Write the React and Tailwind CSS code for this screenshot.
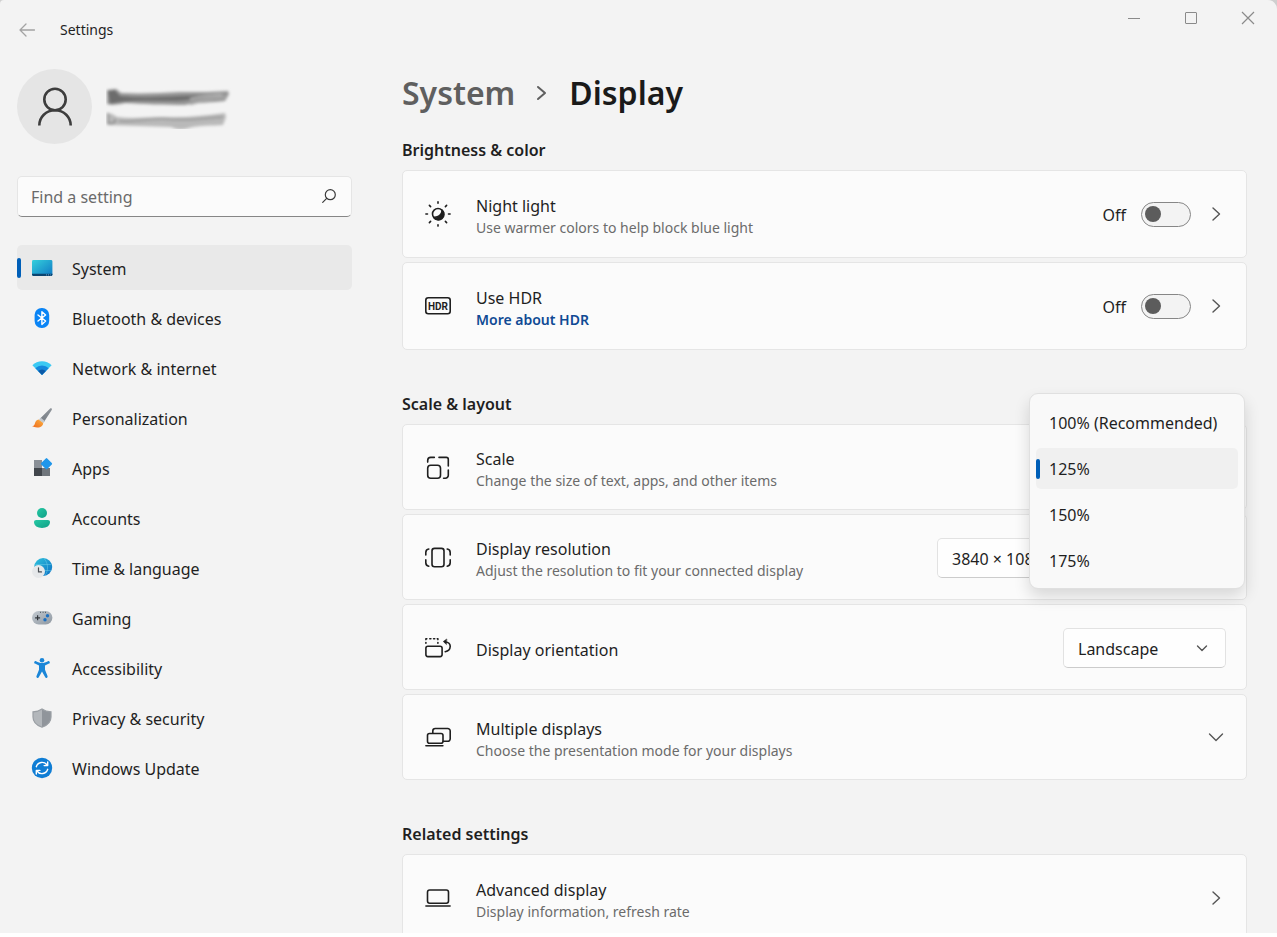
import { useState } from "react";

const navItems = [
  { label: "System", icon: SystemIcon },
  { label: "Bluetooth & devices", icon: BluetoothIcon },
  { label: "Network & internet", icon: NetworkIcon },
  { label: "Personalization", icon: BrushIcon },
  { label: "Apps", icon: AppsIcon },
  { label: "Accounts", icon: AccountsIcon },
  { label: "Time & language", icon: TimeIcon },
  { label: "Gaming", icon: GamingIcon },
  { label: "Accessibility", icon: AccessibilityIcon },
  { label: "Privacy & security", icon: ShieldIcon },
  { label: "Windows Update", icon: UpdateIcon },
];

const scaleOptions = ["100% (Recommended)", "125%", "150%", "175%"];

/* ---------- sidebar icons ---------- */

function NavSvg({ children }) {
  return (
    <svg className="h-5 w-5 shrink-0 overflow-visible" viewBox="0 0 20 20" fill="none" aria-hidden="true">
      {children}
    </svg>
  );
}

function SystemIcon() {
  return (
    <NavSvg>
      <defs>
        <linearGradient id="sys" x1="0" y1="0" x2="1" y2="1">
          <stop offset="0" stopColor="#35d0dc" />
          <stop offset="1" stopColor="#0f78c4" />
        </linearGradient>
      </defs>
      <rect x="0" y="2" width="20.4" height="16" rx="1.4" fill="url(#sys)" />
      <path d="M0 15.8h20.4v.8a1.4 1.4 0 0 1-1.4 1.4H1.4A1.4 1.4 0 0 1 0 16.6z" fill="#0b4470" />
      <path d="M14 16.9h1M16 16.9h1M18 16.9h.8" stroke="#7fb6dc" strokeWidth=".8" />
    </NavSvg>
  );
}

function BluetoothIcon() {
  return (
    <NavSvg>
      <rect x="2.6" y="0" width="14.6" height="20" rx="7" fill="#0a84f5" />
      <path
        d="M6 7l7.600 6-3.700 3.400V3.700l3.700 3.300-7.600 6"
        stroke="#fff"
        strokeWidth="1.4"
        strokeLinejoin="round"
        strokeLinecap="round"
      />
    </NavSvg>
  );
}

function NetworkIcon() {
  return (
    <NavSvg>
      <path d="M.4 7.200a13.500 13.500 0 0 1 19.200 0L10 17z" fill="#3bc9f3" />
      <path d="M3.300 10.200a9.400 9.400 0 0 1 13.400 0L10 17z" fill="#1487dc" />
      <path d="M6.200 13.100a5.400 5.400 0 0 1 7.600 0L10 17z" fill="#0b5aa8" />
    </NavSvg>
  );
}

function BrushIcon() {
  return (
    <NavSvg>
      <defs>
        <linearGradient id="handle" x1="1" y1="0" x2="0" y2="1">
          <stop offset="0" stopColor="#8f959b" />
          <stop offset="1" stopColor="#767c83" />
        </linearGradient>
        <linearGradient id="bristle" x1="1" y1="0" x2="0" y2="1">
          <stop offset="0" stopColor="#fbb040" />
          <stop offset="1" stopColor="#ee6a1c" />
        </linearGradient>
      </defs>
      <path d="M19.600.5c.5.400.4 1 .1 1.500l-7.900 12.300-4.100-3.300L17.900.700c.5-.5 1.200-.6 1.700-.2z" fill="url(#handle)" />
      <path d="M8.800 9.800l4 3.200-1.600 2.200-4.300-3.500z" fill="#c4c9ce" />
      <path d="M6.600 11.500l4.500 3.600c.3 2.800-2.600 4.700-6 4.500-1.900-.1-3.900-.6-5.100-1.500 2-.2 2.500-1.300 2.900-2.700.5-1.900 1.700-3.600 3.700-3.900z" fill="url(#bristle)" />
    </NavSvg>
  );
}

function AppsIcon() {
  return (
    <NavSvg>
      <rect x="2" y="2" width="8" height="8" fill="#8a9097" />
      <rect x="2" y="10" width="8" height="8" fill="#41464c" />
      <rect x="10" y="10" width="8" height="8" fill="#70767c" />
      <path d="M13.800.4a1 1 0 0 1 1.400 0l4.600 4.700a1 1 0 0 1 0 1.400l-4.600 4.600a1 1 0 0 1-1.400 0L9.200 6.500a1 1 0 0 1 0-1.400z" fill="#1f96ea" />
    </NavSvg>
  );
}

function AccountsIcon() {
  return (
    <NavSvg>
      <defs>
        <linearGradient id="acc" x1="0" y1="0" x2="1" y2="1">
          <stop offset="0" stopColor="#26c9a4" />
          <stop offset="1" stopColor="#0f9f86" />
        </linearGradient>
      </defs>
      <circle cx="10" cy="5" r="5" fill="url(#acc)" />
      <path d="M4.200 12h11.600c1.300 0 2.200.9 2.200 2.100 0 3.800-3.500 5.900-8 5.900s-8-2.100-8-5.900C2 12.900 2.900 12 4.200 12z" fill="url(#acc)" />
    </NavSvg>
  );
}

function TimeIcon() {
  return (
    <NavSvg>
      <defs>
        <linearGradient id="globe" x1="0" y1="0" x2="1" y2="1">
          <stop offset="0" stopColor="#2fc3dc" />
          <stop offset="1" stopColor="#0c6fc4" />
        </linearGradient>
      </defs>
      <circle cx="11.200" cy="9" r="9" fill="url(#globe)" />
      <path d="M3.500 6.500h16M9 12.500h10.500M12 .5c4.500 4.500 4.500 12.500 1 17" stroke="#7fdcf0" strokeWidth=".8" opacity=".5" />
      <circle cx="6.500" cy="13.500" r="6.500" fill="#e6e8ea" />
      <path d="M6.500 9.800v4.100h3" stroke="#4a4f55" strokeWidth="1.200" strokeLinecap="round" />
    </NavSvg>
  );
}

function GamingIcon() {
  return (
    <NavSvg>
      <defs>
        <linearGradient id="pad" x1="0" y1="0" x2="1" y2="1">
          <stop offset="0" stopColor="#c3cad1" />
          <stop offset="1" stopColor="#8f98a1" />
        </linearGradient>
      </defs>
      <rect x="0" y="3" width="20.400" height="13.400" rx="6.700" fill="url(#pad)" />
      <path d="M8 4.300h1M10.600 4.300h1M13 4.300h1" stroke="#4a5158" strokeWidth="1" />
      <path d="M5.600 7.300v5M3.100 9.800h5" stroke="#32373c" strokeWidth="1.200" />
      <circle cx="15.500" cy="7.700" r="1.700" fill="#1d6fc0" />
      <circle cx="13" cy="11.800" r="1.700" fill="#1d6fc0" />
    </NavSvg>
  );
}

function AccessibilityIcon() {
  return (
    <NavSvg>
      <circle cx="10" cy="2.300" r="2.300" fill="#1a86d8" />
      <path
        d="M2.300 3.900c.3-.8 1.100-1 1.800-.7C6 4.100 8 5 10 5s4-.9 5.900-1.800c.7-.3 1.500-.1 1.800.7.300.7 0 1.400-.7 1.700l-4 1.800v4.400l2.500 6.300c.3.800 0 1.500-.7 1.800-.7.200-1.400 0-1.700-.8L10 13.600l-3.100 5.500c-.3.800-1 1-1.700.8-.7-.3-1-1-.7-1.800L7 11.800V7.400L3 5.600c-.7-.3-1-1-.7-1.700z"
        fill="#1a86d8"
      />
    </NavSvg>
  );
}

function ShieldIcon() {
  return (
    <NavSvg>
      <path d="M10 1c2.600 1.900 5.500 2.700 9 2.800V9c0 5-3.500 8.300-9 10.200z" fill="#90959b" />
      <path d="M10 1C7.400 2.900 4.500 3.700 1 3.800V9c0 5 3.500 8.300 9 10.200z" fill="#b3b7bb" />
      <path d="M10 1c2.600 1.900 5.500 2.700 9 2.800V9c0 5-3.500 8.300-9 10.200C4.500 17.300 1 14 1 9V3.800C4.500 3.700 7.400 2.900 10 1z" stroke="#9a9fa4" strokeWidth="1.200" />
    </NavSvg>
  );
}

function UpdateIcon() {
  return (
    <NavSvg>
      <circle cx="10" cy="10" r="10.200" fill="#0f7dd4" />
      <path
        d="M4.300 8.700A6 6 0 0 1 15 7M15.700 4v3.600h-3.600M15.700 11.300A6 6 0 0 1 5 13M4.300 16v-3.600h3.600"
        stroke="#fff"
        strokeWidth="1.400"
        strokeLinecap="round"
        strokeLinejoin="round"
      />
    </NavSvg>
  );
}

/* ---------- card icons ---------- */

function CardSvg({ children }) {
  return (
    <svg
      className="shrink-0 text-[#1f1f1f]"
      width="26"
      height="26"
      viewBox="0 0 26 26"
      fill="none"
      stroke="currentColor"
      strokeWidth="1.600"
      strokeLinecap="round"
      strokeLinejoin="round"
      aria-hidden="true"
    >
      {children}
    </svg>
  );
}

function NightLightIcon() {
  return (
    <CardSvg>
      <circle cx="13" cy="13" r="5.500" />
      <path d="M17.200 9.400A5.500 5.500 0 1 1 8.700 16.200c4.500.5 8.200-2.200 8.500-6.800z" fill="currentColor" />
      <path d="M13 .9v1.300M13 23.800v1.300M.9 13h1.600M23.500 13h1.600M4.400 4.400l1.200 1.200M20.400 20.400l1.200 1.200M4.400 21.600l1.200-1.200M20.400 5.600l1.200-1.200" />
    </CardSvg>
  );
}

function HdrIcon() {
  return (
    <CardSvg>
      <rect x=".8" y="4.800" width="24.400" height="16" rx="2.500" />
      <text
        x="13"
        y="16.500"
        textAnchor="middle"
        fill="currentColor"
        stroke="none"
        className="font-['Liberation_Sans_Narrow','Roboto',sans-serif] text-[10px] font-bold"
      >
        HDR
      </text>
    </CardSvg>
  );
}

function ScaleIcon() {
  return (
    <CardSvg>
      <rect x="2.700" y="11.200" width="12.800" height="13" rx="3" />
      <path d="M2.700 8.100V6.400a3 3 0 0 1 3-3h3.600M14 3.400h7.300a2 2 0 0 1 2 2v6.500M23.300 16.100v5.200a3 3 0 0 1-3 3h-1.700" />
    </CardSvg>
  );
}

function ResolutionIcon() {
  return (
    <CardSvg>
      <rect x="7" y="4.400" width="12" height="18.300" rx="2.500" />
      <path d="M3.800 5A3.500 3.500 0 0 0 .8 8.400V11M.8 15.900v2.900a3.500 3.500 0 0 0 3 3.400M22.200 5a3.500 3.500 0 0 1 3 3.400V11M25.200 15.900v2.900a3.500 3.500 0 0 1-3 3.400" />
    </CardSvg>
  );
}

function OrientationIcon() {
  return (
    <CardSvg>
      <rect x=".9" y="12.200" width="16.200" height="10.400" rx="2" />
      <path d="M.9 9.200V8.600M.9 5.600V4.700h.9M4.800 4.700h1.100M8.600 4.700h1.100M12.300 4.700h.6v.9M12.900 8.600v.6" />
      <path d="M20.300 8c3.100-.1 5 2 4.900 4.500-.1 2.600-2 4.600-5 5.200" />
      <path d="M21.500 5.200l-3.200 2.300 2.900 2.800z" fill="currentColor" strokeWidth=".6" />
    </CardSvg>
  );
}

function MultipleDisplaysIcon() {
  return (
    <CardSvg>
      <rect x="2.500" y="9.500" width="15.500" height="9.700" rx="2" />
      <path d="M7.800 9.200V7a2.500 2.500 0 0 1 2.500-2.500h12.400A2.500 2.500 0 0 1 25.200 7v7.800a2.500 2.500 0 0 1-2.500 2.500h-4.500M.9 21.800h17" />
    </CardSvg>
  );
}

function AdvancedDisplayIcon() {
  return (
    <CardSvg>
      <rect x="2.500" y="5" width="21" height="13.200" rx="2.200" />
      <path d="M.9 21h24.200" />
    </CardSvg>
  );
}

function Chevron({ dir = "right", small = false }) {
  const d = dir === "right" ? "M7 4l6.500 6L7 16" : small ? "M5.500 8l4.500 4.500L14.500 8" : "M3.500 7l6.500 6.500L16.500 7";
  return (
    <svg
      className="h-5 w-5 shrink-0 text-[#555]"
      viewBox="0 0 20 20"
      fill="none"
      stroke="currentColor"
      strokeWidth="1.400"
      strokeLinecap="round"
      strokeLinejoin="round"
      aria-hidden="true"
    >
      <path d={d} />
    </svg>
  );
}

/* ---------- building blocks ---------- */

function TitleBar() {
  const control = "flex h-9 w-[57px] items-center justify-center text-[#8a8a8a]";
  return (
    <header className="flex items-start justify-between">
      <div className="flex h-[60px] items-center gap-6 pl-[18px]">
        <button aria-label="Back" className="text-[#a3a3a3]">
          <svg width="18" height="18" viewBox="0 0 18 18" fill="none" stroke="currentColor" strokeWidth="1.300" strokeLinecap="round" strokeLinejoin="round">
            <path d="M16.500 9H2M8 3L2 9l6 6" />
          </svg>
        </button>
        <h1 className="text-[14px] leading-5">Settings</h1>
      </div>
      <div className="flex pr-px">
        <button aria-label="Minimize" className={control}>
          <svg width="14" height="14" viewBox="0 0 14 14" stroke="currentColor" fill="none">
            <path d="M1 7.500h12" />
          </svg>
        </button>
        <button aria-label="Maximize" className={control}>
          <svg width="14" height="14" viewBox="0 0 14 14" stroke="currentColor" fill="none">
            <rect x="1.500" y="1.500" width="11" height="11" rx=".5" />
          </svg>
        </button>
        <button aria-label="Close" className={control}>
          <svg width="14" height="14" viewBox="0 0 14 14" stroke="currentColor" fill="none" strokeWidth="1.200">
            <path d="M1 1l12 12M13 1L1 13" />
          </svg>
        </button>
      </div>
    </header>
  );
}

// name and e-mail are smudged out
function SmudgedName() {
  return (
    <svg width="126" height="44" viewBox="0 0 126 44" fill="none" aria-hidden="true">
      <defs>
        <filter id="smudge" x="-10%" y="-30%" width="120%" height="160%">
          <feGaussianBlur stdDeviation="1.400" />
        </filter>
      </defs>
      <g filter="url(#smudge)">
        <path d="M1 5l9-1 5 4c22 1 40 0 58-1 20 0 38 0 49-1l1 3-4 7c-14 2-28 1-40 4-18 0-44-1-60-2-8 2-14 2-18 1z" fill="#959595" />
        <path d="M2 6l7-1 5 6c20 2 40 1 58 0 14 0 28-1 40-2-14 3-26 6-40 7-20 0-40-1-58 1l-10 2z" fill="#6c6c6c" />
        <path d="M84 19c12-4 24-6 36-7" stroke="#a6a6a6" strokeWidth="2.500" />
        <path d="M84 14c12-3 20-4 32-4" stroke="#bdbdbd" strokeWidth="1.500" />
        <path d="M1 28l5 1 5 3c16 2 30 0 46 0 20 1 40-1 62-4l1 4-3 8c-12 1-24 0-34 3-6 2-12 2-18-1-18-1-42-1-64-2z" fill="#b9b9b9" />
        <path d="M2 28v10c4 1 8 0 7-4" stroke="#8f8f8f" strokeWidth="2" />
        <path d="M13 36c16 2 32-4 50-2s38-1 54-2" stroke="#a0a0a0" strokeWidth="2.500" />
      </g>
    </svg>
  );
}

function Sidebar() {
  const [active, setActive] = useState("System");

  return (
    <aside className="w-[335px] shrink-0 pt-[9px]">
      <div className="flex items-center gap-[14px]">
        <div className="flex h-[75px] w-[75px] items-center justify-center rounded-full bg-[#e5e5e5]">
          <svg width="36" height="40" viewBox="0 0 36 40" fill="none" stroke="#3d3d3d" strokeWidth="2.600" aria-hidden="true">
            <circle cx="18" cy="12.500" r="10.700" />
            <path d="M2.300 38.500C2.300 30 9 23.300 18 23.300S33.700 30 33.700 38.500" />
          </svg>
        </div>
        <SmudgedName />
      </div>

      <div className="relative mt-8">
        <input
          type="text"
          aria-label="Find a setting"
          placeholder="Find a setting"
          className="h-[41px] w-full rounded-[5px] border border-[#e5e5e5] border-b-[#868686] bg-[#fbfbfb] pr-10 pl-[13px] text-[16px] outline-none placeholder:text-[#6a6a6a]"
        />
        <svg className="absolute top-3 right-[15px]" width="16" height="16" viewBox="0 0 16 16" fill="none" stroke="#3a3a3a" strokeWidth="1.200" strokeLinecap="round" aria-hidden="true">
          <circle cx="9.300" cy="6.700" r="5" />
          <path d="M5.700 10.300L1.700 14.300" />
        </svg>
      </div>

      <nav className="mt-7 flex flex-col gap-[5px]">
        {navItems.map(({ label, icon: Icon }) => (
          <button
            key={label}
            onClick={() => setActive(label)}
            className={`relative flex h-[45px] items-center gap-5 rounded-[5px] pl-[15px] text-left text-[16px] ${
              active === label ? "bg-[#e9e9e9]" : ""
            }`}
          >
            {active === label && <span className="absolute left-0 h-5 w-1 rounded-full bg-[#005fb8]" />}
            <Icon />
            <span className="pt-0.5">{label}</span>
          </button>
        ))}
      </nav>
    </aside>
  );
}

function SettingCard({ icon, title, desc, tall, children }) {
  return (
    <div
      className={`relative flex items-center gap-[25px] rounded-[5px] border border-[#e5e5e5] bg-[#fbfbfb] pr-5 pl-[22px] ${
        tall ? "min-h-[88px]" : "min-h-[86px]"
      }`}
    >
      {icon}
      <div className="min-w-0 flex-1 pt-[6px]">
        <div className="text-[16px] leading-[21px]">{title}</div>
        {desc && <div className="text-[14px] leading-[21px] text-[#6b6b6b]">{desc}</div>}
      </div>
      {children}
    </div>
  );
}

function Toggle({ label }) {
  const [on, setOn] = useState(false);
  return (
    <div className="flex items-center gap-[15px]">
      <span className="pt-0.5 text-[16px] leading-[21px]">{on ? "On" : "Off"}</span>
      <input
        type="checkbox"
        role="switch"
        aria-label={label}
        checked={on}
        onChange={(e) => setOn(e.target.checked)}
        className="flex h-[25px] w-[50px] appearance-none items-center rounded-full border border-[#868686] bg-[#f3f3f3] px-[3px] before:h-4 before:w-4 before:rounded-full before:bg-[#5c5c5c] checked:justify-end checked:border-[#005fb8] checked:bg-[#005fb8] checked:before:bg-white"
      />
      <button aria-label={`${label} options`}>
        <Chevron />
      </button>
    </div>
  );
}

function Select({ label, options, wide }) {
  return (
    <div className={`relative mt-0.5 ${wide ? "w-[289px]" : "w-[163px]"}`}>
      <select
        aria-label={label}
        className="h-10 w-full appearance-none rounded-[5px] border border-[#e2e2e2] border-b-[#cccccc] bg-[#fefefe] pt-0.5 pl-[14px] text-[16px]"
      >
        {options.map((o) => (
          <option key={o}>{o}</option>
        ))}
      </select>
      <span className="pointer-events-none absolute top-[10px] right-[14px]">
        <Chevron dir="down" small />
      </span>
    </div>
  );
}

function ScaleMenu() {
  const [scale, setScale] = useState("125%");
  return (
    <div
      role="listbox"
      aria-label="Scale"
      className="absolute -top-8 right-px z-10 flex w-[216px] flex-col gap-[5px] rounded-[9px] border border-[#e0e0e0] bg-[#f9f9f9] px-[6px] pt-2 pb-[7px] shadow-[0_8px_16px_rgba(0,0,0,0.14)]"
    >
      {scaleOptions.map((option) => (
        <button
          key={option}
          role="option"
          aria-selected={scale === option}
          onClick={() => setScale(option)}
          className={`relative flex h-[41px] items-center rounded-[5px] pl-[13px] text-left text-[16px] whitespace-nowrap ${
            scale === option ? "bg-[#f0f0f0]" : ""
          }`}
        >
          {scale === option && <span className="absolute left-0 h-5 w-1 rounded-full bg-[#005fb8]" />}
          {option}
        </button>
      ))}
    </div>
  );
}

function Section({ title, children }) {
  return (
    <section>
      <h3 className="mb-2 text-[16px] leading-6 font-semibold">{title}</h3>
      <div className="flex flex-col gap-1">{children}</div>
    </section>
  );
}

export default function App() {
  return (
    <div className="flex h-screen flex-col bg-white pb-1 font-['Noto_Sans','Open_Sans',sans-serif] text-[#1f1f1f]">
      <div className="flex-1 overflow-hidden bg-[#cfcfcf]">
        <div className="h-full overflow-hidden rounded-tl-[4px] rounded-tr-[9px] bg-[#f3f3f3]">
          <TitleBar />
          <div className="flex gap-[50px] pr-[30px] pl-[17px]">
            <Sidebar />

            <main className="min-w-0 flex-1">
              <h2 className="flex items-center gap-5 pt-[9px] text-[32px] leading-[48px] font-semibold">
                <a href="#system" className="text-[#5f5f5f]">
                  System
                </a>
                <svg width="14" height="18" viewBox="0 0 14 18" fill="none" stroke="#5f5f5f" strokeWidth="2" strokeLinecap="round" strokeLinejoin="round" aria-hidden="true">
                  <path d="M3 3l7 6-7 6" />
                </svg>
                <span className="text-[#1a1a1a]">Display</span>
              </h2>

              <div className="mt-[21px] flex flex-col gap-[42px]">
                <Section title="Brightness & color">
                  <SettingCard tall icon={<NightLightIcon />} title="Night light" desc="Use warmer colors to help block blue light">
                    <Toggle label="Night light" />
                  </SettingCard>
                  <SettingCard
                    tall
                    icon={<HdrIcon />}
                    title="Use HDR"
                    desc={
                      <a href="#hdr" className="font-semibold text-[#0f4a94]">
                        More about HDR
                      </a>
                    }
                  >
                    <Toggle label="Use HDR" />
                  </SettingCard>
                </Section>

                <Section title="Scale & layout">
                  <SettingCard icon={<ScaleIcon />} title="Scale" desc="Change the size of text, apps, and other items">
                    <ScaleMenu />
                  </SettingCard>
                  <SettingCard
                    icon={<ResolutionIcon />}
                    title="Display resolution"
                    desc="Adjust the resolution to fit your connected display"
                  >
                    <Select wide label="Display resolution" options={["3840 × 1080"]} />
                  </SettingCard>
                  <SettingCard icon={<OrientationIcon />} title="Display orientation">
                    <Select label="Display orientation" options={["Landscape", "Portrait"]} />
                  </SettingCard>
                  <SettingCard
                    icon={<MultipleDisplaysIcon />}
                    title="Multiple displays"
                    desc="Choose the presentation mode for your displays"
                  >
                    <button aria-label="Expand multiple displays">
                      <Chevron dir="down" />
                    </button>
                  </SettingCard>
                </Section>

                <Section title="Related settings">
                  <SettingCard tall icon={<AdvancedDisplayIcon />} title="Advanced display" desc="Display information, refresh rate">
                    <button aria-label="Open advanced display">
                      <Chevron />
                    </button>
                  </SettingCard>
                </Section>
              </div>
            </main>
          </div>
        </div>
      </div>
    </div>
  );
}
